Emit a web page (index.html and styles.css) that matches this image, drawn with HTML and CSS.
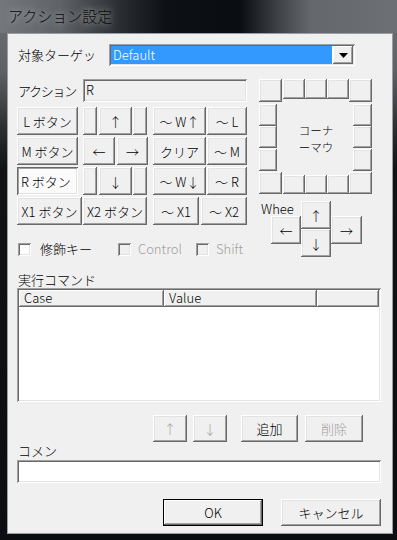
FILE: index.html
```html
<!DOCTYPE html>
<html lang="ja">

<head>
    <meta charset="UTF-8">
    <meta name="viewport" content="width=device-width, initial-scale=1.0">
    <title>アクション設定</title>
    <link rel="stylesheet" href="styles.css">
</head>

<body>
    <div class="window">
        <div class="titlebar"><span class="title">アクション設定</span></div>

        <div class="client">
            <!-- target -->
            <div class="target-row">
                <span class="label target-label">対象ターゲッ</span>
                <div class="combo">
                    <span class="combo-value">Default</span>
                    <span class="combo-btn">
                        <svg width="9" height="5" viewBox="0 0 9 5"><path d="M0 0h9L4.5 5z" fill="#000"/></svg>
                    </span>
                </div>
            </div>

            <div class="action-area">
                <div class="action-left">
                    <div class="action-row">
                        <span class="label action-label">アクション</span>
                        <div class="field readonly">R</div>
                    </div>

                    <div class="btn-row">
                        <button class="btn w61">L ボタン</button>
                        <button class="btn w14 ml5"></button>
                        <button class="btn w33 ml2">↑</button>
                        <button class="btn w14 ml1"></button>
                        <button class="btn w53 ml6">～ W↑</button>
                        <button class="btn w40 ml1">～ L</button>
                    </div>
                    <div class="btn-row">
                        <button class="btn w61">M ボタン</button>
                        <button class="btn w32 ml5">←</button>
                        <button class="btn w31 ml2">→</button>
                        <button class="btn w53 ml5">クリア</button>
                        <button class="btn w40 ml1">～ M</button>
                    </div>
                    <div class="btn-row">
                        <button class="btn w61 checked">R ボタン</button>
                        <button class="btn w14 ml5"></button>
                        <button class="btn w33 ml2">↓</button>
                        <button class="btn w14 ml1"></button>
                        <button class="btn w53 ml6">～ W↓</button>
                        <button class="btn w40 ml1">～ R</button>
                    </div>
                    <div class="btn-row">
                        <button class="btn w65">X1 ボタン</button>
                        <button class="btn w64 ml1">X2 ボタン</button>
                        <button class="btn w46 ml6">～ X1</button>
                        <button class="btn w46 ml2">～ X2</button>
                    </div>

                    <div class="check-row">
                        <label class="check check-mod"><span class="box"></span><span class="check-text">修飾キー</span></label>
                        <label class="check check-ctrl disabled"><span class="box"></span><span class="check-text">Control</span></label>
                        <label class="check disabled"><span class="box"></span><span class="check-text">Shift</span></label>
                    </div>
                </div>

                <div class="action-right">
                    <div class="corner-grid">
                        <button class="btn corner"></button>
                        <button class="btn top-box"></button>
                        <button class="btn top-box"></button>
                        <button class="btn top-box"></button>
                        <button class="btn corner"></button>

                        <button class="btn left-box r2"></button>
                        <div class="corner-text">コーナ<br>ーマウ</div>
                        <button class="btn right-box r2"></button>
                        <button class="btn left-box r3"></button>
                        <button class="btn right-box r3"></button>
                        <button class="btn left-box r4"></button>
                        <button class="btn right-box r4"></button>

                        <button class="btn corner"></button>
                        <button class="btn bottom-box"></button>
                        <button class="btn bottom-box"></button>
                        <button class="btn bottom-box"></button>
                        <button class="btn corner"></button>
                    </div>

                    <div class="wheel">
                        <span class="wheel-label">Whee</span>
                        <button class="btn wheel-up">↑</button>
                        <button class="btn wheel-left">←</button>
                        <button class="btn wheel-right">→</button>
                        <button class="btn wheel-down">↓</button>
                    </div>
                </div>
            </div>

            <div class="group-label cmd-label">実行コマンド</div>
            <div class="listview">
                <div class="lv-header">
                    <span class="lv-col col-case">Case</span>
                    <span class="lv-col col-value">Value</span>
                    <span class="lv-col col-rest"></span>
                </div>
            </div>

            <div class="cmd-buttons">
                <button class="btn disabled w34 cmd-first">↑</button>
                <button class="btn disabled w34 ml6">↓</button>
                <button class="btn w57 ml14">追加</button>
                <button class="btn disabled w58 ml7">削除</button>
            </div>

            <div class="group-label comment-label">コメン</div>
            <div class="field comment"></div>

            <div class="dialog-buttons">
                <button class="btn default w100">OK</button>
                <button class="btn w100 ml18">キャンセル</button>
            </div>
        </div>
    </div>
</body>

</html>
```

FILE: styles.css
```css
/* classic dialog */
body {
    margin: 0;
    background: #0b0d10;
    font-family: "Noto Sans CJK JP", "Noto Sans", sans-serif;
    font-size: 13px;
    font-weight: 300;
    color: #000;
}

.window {
    width: 397px;
    height: 540px;
    overflow: hidden;
    background: linear-gradient(to bottom, #6d7175 0, #5e6266 70px, #2a2d30 130px, #101215 170px, #0b0d10 100%);
}

.titlebar {
    height: 33px;
    background: linear-gradient(to right, #74787c 0, #5f6367 60px, #2a2d31 120px, #0d1014 165px, #0a0d11 240px, #3a3d41 275px, #64686c 310px, #6c7074 100%);
}

.title {
    display: block;
    padding: 6px 0 0 8px;
    font-size: 15px;
    line-height: 20px;
    color: #0a0a0a;
    text-shadow: 0 0 6px rgba(255, 255, 255, 0.55), 0 0 12px rgba(255, 255, 255, 0.35);
}

.client {
    margin-left: 7px;
    width: 384px;
    height: 499px;
    border: 1px solid #9a9da1;
    background: #f0f0f0;
}

/* generic pieces */
.label {
    line-height: 16px;
}

.btn {
    display: flex;
    align-items: center;
    justify-content: center;
    height: 28px;
    padding: 0;
    margin: 0;
    border: none;
    background: #f0f0f0;
    font-family: inherit;
    font-size: 13px;
    font-weight: 300;
    color: #000;
    white-space: nowrap;
    box-sizing: border-box;
    box-shadow: inset -1px -1px #696969, inset 1px 1px #fff, inset -2px -2px #a0a0a0, inset 2px 2px #e3e3e3;
}

.btn.checked {
    background: #fbfbfb;
    box-shadow: inset 1px 1px #696969, inset -1px -1px #fff, inset 2px 2px #a0a0a0, inset -2px -2px #e3e3e3;
    justify-content: flex-start;
    padding-left: 4px;
}

.btn.disabled {
    color: #a0a0a0;
}

.btn.default {
    box-shadow: inset 0 0 0 1px #000, inset -2px -2px #696969, inset 2px 2px #fff, inset -3px -3px #a0a0a0;
}

.field {
    box-sizing: border-box;
    height: 23px;
    background: #fff;
    padding: 2px 3px;
    line-height: 18px;
    box-shadow: inset 1px 1px #a0a0a0, inset -1px -1px #fff, inset 2px 2px #696969, inset -2px -2px #e3e3e3;
}

.field.readonly {
    background: #f0f0f0;
}

/* widths and gaps */
.w14 { width: 14px; }
.w31 { width: 31px; }
.w32 { width: 32px; }
.w33 { width: 33px; }
.w34 { width: 34px; }
.w40 { width: 40px; }
.w46 { width: 46px; }
.w53 { width: 53px; }
.w57 { width: 57px; }
.w58 { width: 58px; }
.w61 { width: 61px; }
.w64 { width: 64px; }
.w65 { width: 65px; }
.w100 { width: 100px; }
.ml1 { margin-left: 1px; }
.ml2 { margin-left: 2px; }
.ml5 { margin-left: 5px; }
.ml6 { margin-left: 6px; }
.ml7 { margin-left: 7px; }
.ml14 { margin-left: 14px; }
.ml18 { margin-left: 18px; }

/* target combo */
.target-row {
    display: flex;
    align-items: center;
    padding: 10px 0 0 9px;
    height: 22px;
}

.target-label {
    width: 91px;
    padding-left: 1px;
}

.combo {
    display: flex;
    width: 246px;
    height: 22px;
    box-sizing: border-box;
    padding: 2px;
    background: #fff;
    box-shadow: inset 1px 1px #a0a0a0, inset -1px -1px #fff, inset 2px 2px #696969, inset -2px -2px #e3e3e3;
}

.combo-value {
    flex: 1;
    margin-right: 1px;
    background: #3399ff;
    color: #fff;
    padding-left: 2px;
    line-height: 17px;
}

.combo-btn {
    width: 20px;
    display: flex;
    align-items: center;
    justify-content: center;
    background: #f0f0f0;
    box-shadow: inset -1px -1px #696969, inset 1px 1px #fff, inset -2px -2px #a0a0a0;
}

/* action area */
.action-area {
    display: flex;
    padding-left: 9px;
    margin-top: 13px;
}

.action-left {
    width: 231px;
}

.action-row {
    display: flex;
    align-items: center;
    height: 23px;
}

.action-label {
    width: 65px;
    padding-left: 1px;
    letter-spacing: -1.3px;
}

.action-row .field {
    width: 164px;
}

.btn-row {
    display: flex;
    margin-top: 2px;
}

.action-row + .btn-row {
    margin-top: 5px;
}

.check-row {
    display: flex;
    align-items: center;
    height: 14px;
    margin-top: 17px;
}

.check {
    display: flex;
    align-items: center;
}

.check-mod {
    width: 100px;
    padding-left: 1px;
}

.check-ctrl {
    width: 78px;
}

.check .box {
    width: 13px;
    height: 13px;
    box-sizing: border-box;
    background: #fff;
    box-shadow: inset 1px 1px #a0a0a0, inset -1px -1px #fff, inset 2px 2px #696969, inset -2px -2px #e3e3e3;
}

.check-text {
    margin-left: 9px;
    line-height: 16px;
}

.check.disabled .box {
    background: #f0f0f0;
}

.check.disabled .check-text {
    color: #a0a0a0;
    margin-left: 7px;
}

/* corner mouse */
.action-right {
    margin-left: 11px;
}

.corner-grid {
    display: grid;
    grid-template-columns: 24px 22px 22px 22px 23px;
    grid-template-rows: 25px 22px 23px 23px 22px;
    width: 113px;
}

.corner-grid .btn {
    height: auto;
}

.corner {
    width: 23px;
    height: 23px !important;
}

.corner-grid .corner:nth-child(5) {
    justify-self: end;
}

.top-box {
    width: 22px;
    height: 20px !important;
    align-self: start;
}

.bottom-box {
    width: 22px;
    height: 19px !important;
    align-self: end;
}

.left-box {
    grid-column: 1;
    width: 18px;
    height: 22px !important;
    align-self: start;
}

.right-box {
    grid-column: 5;
    width: 19px;
    height: 22px !important;
    justify-self: end;
    align-self: start;
}

.r2 { grid-row: 2; }
.r3 { grid-row: 3; }
.r4 { grid-row: 4; }

.corner-grid .corner:nth-last-child(-n+5),
.corner-grid .bottom-box {
    grid-row: 5;
}

.corner-grid .corner:nth-last-child(5) {
    height: 22px !important;
    align-self: end;
}

.corner-grid .corner:last-child {
    height: 22px !important;
    justify-self: end;
}

.corner-text {
    grid-column: 2 / 5;
    grid-row: 2 / 5;
    align-self: center;
    justify-self: center;
    text-align: center;
    font-size: 11.5px;
    line-height: 17px;
    margin-top: 2px;
}

/* wheel */
.wheel {
    display: grid;
    grid-template-columns: 12px 30px 30px 31px;
    grid-template-rows: 15px 13px 15px 13px;
    margin-top: 7px;
}

.wheel .btn {
    height: 28px;
}

.wheel-label {
    grid-column: 1 / 3;
    grid-row: 1;
    padding-left: 2px;
    line-height: 15px;
}

.wheel-up {
    grid-column: 3;
    grid-row: 1 / 3;
}

.wheel-left {
    grid-column: 2;
    grid-row: 2 / 4;
}

.wheel-right {
    grid-column: 4;
    grid-row: 2 / 4;
    width: 31px;
}

.wheel-down {
    grid-column: 3;
    grid-row: 3 / 5;
}

/* command list */
.group-label {
    padding-left: 10px;
    line-height: 16px;
    height: 16px;
}

.cmd-label {
    margin-top: 15px;
}

.listview {
    margin-left: 9px;
    width: 364px;
    height: 114px;
    box-sizing: border-box;
    padding: 2px;
    background: #fff;
    box-shadow: inset 1px 1px #a0a0a0, inset -1px -1px #fff, inset 2px 2px #696969, inset -2px -2px #e3e3e3;
}

.lv-header {
    display: flex;
    height: 17px;
}

.lv-col {
    box-sizing: border-box;
    height: 17px;
    background: #f0f0f0;
    padding-left: 5px;
    line-height: 16px;
    box-shadow: inset -1px -1px #696969, inset 1px 1px #fff, inset -2px -2px #a0a0a0;
}

.col-case { width: 145px; }
.col-value { width: 153px; }
.col-rest { width: 62px; }

.cmd-buttons {
    display: flex;
    margin-top: 13px;
}

.cmd-buttons .btn {
    height: 27px;
}

.cmd-first {
    margin-left: 145px;
}

.comment-label {
    margin-top: 1px;
    height: 17px;
}

.comment {
    margin-left: 9px;
    width: 364px;
}

.dialog-buttons {
    display: flex;
    margin-top: 16px;
    padding-left: 155px;
}

.dialog-buttons .btn {
    height: 27px;
}
```
